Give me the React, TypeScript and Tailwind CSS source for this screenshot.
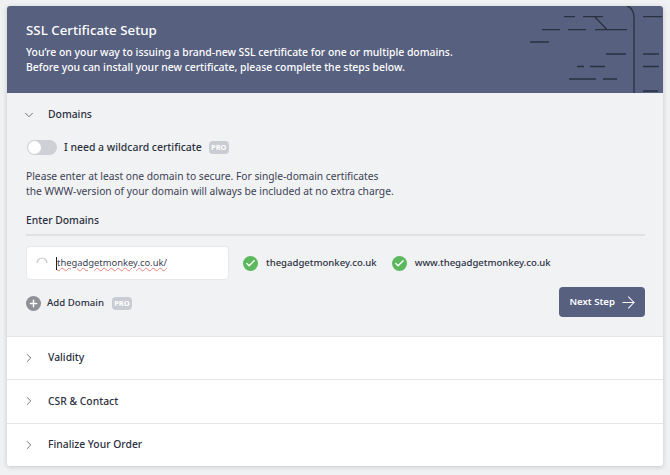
import React from 'react'
import { ChevronDown, ChevronRight, ArrowRight, Check, Plus } from 'lucide-react'

const ProBadge = () => (
  <span className="flex h-[13px] w-5 items-center justify-center rounded-sm bg-[#c9ccd2] text-[7.5px] font-bold text-white">
    PRO
  </span>
)

const Verified = ({ domain }: { domain: string }) => (
  <div className="flex items-center">
    <span className="flex h-[15px] w-[15px] items-center justify-center rounded-full bg-[#5cb85c] text-white">
      <Check size={11} strokeWidth={3} />
    </span>
    <span className="ml-[8px] text-[9.55px] font-medium text-[#2b3040]">{domain}</span>
  </div>
)

const HeaderArt = () => (
  <svg className="absolute left-0 top-0" width="656" height="87" viewBox="7 6 656 87" fill="none" stroke="#2a3040" strokeWidth="1.3">
    <path d="M564 16.7h11M583 16.7h20M595 17l12 12.7M595 29.7h32M542 29.7h18M568 29.7h18M530 42h19M606 54h20M577 66.5h7M590 66.5h15M569 79h27M603 79h14" />
    <path d="M627 6c5 2 7 6 7 11v76" />
    <path d="M643 16.7h19M643 54h16M643 66.5h16M643 91h15" />
  </svg>
)

const Step = ({ label }: { label: string }) => (
  <div className="flex h-[43.3px] items-center border-t border-[#e4e5e8] bg-white pl-[15px]">
    <ChevronRight size={14} strokeWidth={1.4} className="text-[#55575d]" />
    <span className="ml-[12px] text-[10.35px] font-medium text-[#2b3040]">{label}</span>
  </div>
)

export default function App() {
  return (
    <div className="h-[475px] w-[670px] bg-[#f0f1f3] px-[7px] pt-[6px] font-['Noto_Sans',sans-serif]">
      <div className="w-[656px] overflow-hidden rounded-[3px] shadow-[0_1px_5px_rgba(0,0,0,0.18)]">
        <div className="relative h-[87px] bg-[#57607f] pl-[19px] pt-[14px] text-white">
          <HeaderArt />
          <h1 className="text-[13.3px] font-medium leading-5">SSL Certificate Setup</h1>
          <p className="mt-[5px] text-[10.42px] font-medium leading-[14.5px]">
            You&rsquo;re on your way to issuing a brand-new SSL certificate for one or multiple domains.
            <br />
            Before you can install your new certificate, please complete the steps below.
          </p>
        </div>

        <div className="h-[243px] bg-[#f1f2f4] pl-[19px] pr-[18px]">
          <div className="flex h-[43px] items-center">
            <ChevronDown size={14} strokeWidth={1.4} className="-ml-[4px] text-[#55575d]" />
            <span className="ml-[12px] text-[10.35px] font-medium text-[#2b3040]">Domains</span>
          </div>
          <div className="mt-[4px] flex items-center">
            <span className="ml-[1px] flex h-[15px] w-[30px] items-center rounded-full bg-[#ced0d5]">
              <span className="h-[13px] w-[13px] translate-x-[1px] rounded-full bg-white" />
            </span>
            <span className="ml-[7px] text-[10.45px] font-medium text-[#2b3040]">I need a wildcard certificate</span>
            <span className="ml-[7px]"><ProBadge /></span>
          </div>
          <p className="mt-[13px] text-[10.25px] leading-[15px] text-[#3b4152]">
            Please enter at least one domain to secure. For single-domain certificates
            <br />
            the WWW-version of your domain will always be included at no extra charge.
          </p>
          <div className="mt-[14px] border-b-2 border-[#e0e1e4] pb-[6px] text-[10.35px] font-medium text-[#2b3040]">
            Enter Domains
          </div>
          <div className="mt-[10px] flex items-center">
            <div className="flex h-[34px] w-[203px] items-center rounded-sm border border-[#e7e8ea] bg-white pl-[9px]">
              <svg width="12" height="12" viewBox="0 0 12 12" fill="none" stroke="#c6c8cc" strokeWidth="1.2">
                <path d="M1 6a5 5 0 0 1 10 0" />
              </svg>
              <span className="ml-[8px] h-[13px] w-px bg-[#222]" />
              <span className="text-[9.4px] text-[#3b4152] underline decoration-wavy decoration-[#e8827f] decoration-1">
                thegadgetmonkey.co.uk/
              </span>
            </div>
            <div className="ml-[14px]"><Verified domain="thegadgetmonkey.co.uk" /></div>
            <div className="ml-[15px]"><Verified domain="www.thegadgetmonkey.co.uk" /></div>
          </div>
          <div className="flex items-start justify-between">
            <div className="mt-[16px] flex items-center">
              <span className="flex h-[15px] w-[15px] items-center justify-center rounded-full bg-[#8f9197] text-white">
                <Plus size={11} strokeWidth={3} />
              </span>
              <span className="ml-[6px] text-[9.65px] font-medium text-[#2b3040]">Add Domain</span>
              <span className="ml-2"><ProBadge /></span>
            </div>
            <button className="mt-[7px] flex h-[30px] w-[86px] items-center justify-end gap-[4px] rounded-sm bg-[#57607f] pr-[7px] text-[9.6px] font-semibold text-white">
              Next Step
              <ArrowRight size={19} strokeWidth={1.3} />
            </button>
          </div>
        </div>

        <Step label="Validity" />
        <Step label="CSR & Contact" />
        <Step label="Finalize Your Order" />
      </div>
    </div>
  )
}
